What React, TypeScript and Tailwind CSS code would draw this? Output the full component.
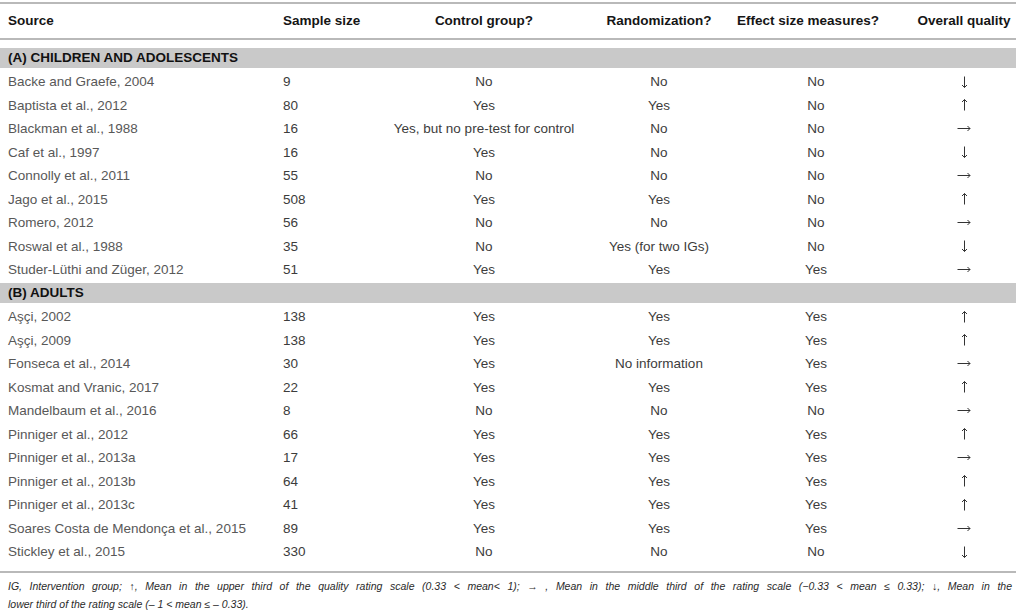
import React from "react";

type Row = [string, string, string, string, string, string];

const groupA: Row[] = [
  ["Backe and Graefe, 2004", "9", "No", "No", "No", "d"],
  ["Baptista et al., 2012", "80", "Yes", "Yes", "No", "u"],
  ["Blackman et al., 1988", "16", "Yes, but no pre-test for control", "No", "No", "r"],
  ["Caf et al., 1997", "16", "Yes", "No", "No", "d"],
  ["Connolly et al., 2011", "55", "No", "No", "No", "r"],
  ["Jago et al., 2015", "508", "Yes", "Yes", "No", "u"],
  ["Romero, 2012", "56", "No", "No", "No", "r"],
  ["Roswal et al., 1988", "35", "No", "Yes (for two IGs)", "No", "d"],
  ["Studer-Lüthi and Züger, 2012", "51", "Yes", "Yes", "Yes", "r"],
];

const groupB: Row[] = [
  ["Aşçi, 2002", "138", "Yes", "Yes", "Yes", "u"],
  ["Aşçi, 2009", "138", "Yes", "Yes", "Yes", "u"],
  ["Fonseca et al., 2014", "30", "Yes", "No information", "Yes", "r"],
  ["Kosmat and Vranic, 2017", "22", "Yes", "Yes", "Yes", "u"],
  ["Mandelbaum et al., 2016", "8", "No", "No", "No", "r"],
  ["Pinniger et al., 2012", "66", "Yes", "Yes", "Yes", "u"],
  ["Pinniger et al., 2013a", "17", "Yes", "Yes", "Yes", "r"],
  ["Pinniger et al., 2013b", "64", "Yes", "Yes", "Yes", "u"],
  ["Pinniger et al., 2013c", "41", "Yes", "Yes", "Yes", "u"],
  ["Soares Costa de Mendonça et al., 2015", "89", "Yes", "Yes", "Yes", "r"],
  ["Stickley et al., 2015", "330", "No", "No", "No", "d"],
];

const grid = "grid grid-cols-[275px_109px_200px_150px_164px_118px]";

function Arrow({ dir }: { dir: string }) {
  if (dir === "r") {
    return (
      <svg width="14" height="7" viewBox="0 0 14 7" className="inline-block">
        <path d="M0.5 3.5H13" stroke="#333" strokeWidth="1" fill="none" />
        <path d="M10.5 1L13 3.5L10.5 6" stroke="#333" strokeWidth="1" fill="none" />
      </svg>
    );
  }
  const up = dir === "u";
  return (
    <svg width="7" height="12" viewBox="0 0 7 12" className="inline-block">
      <path d="M3.5 0.5V11.5" stroke="#333" strokeWidth="1" fill="none" />
      {up ? (
        <path d="M1 3L3.5 0.5L6 3" stroke="#333" strokeWidth="1" fill="none" />
      ) : (
        <path d="M1 9L3.5 11.5L6 9" stroke="#333" strokeWidth="1" fill="none" />
      )}
    </svg>
  );
}

function DataRow({ r }: { r: Row }) {
  return (
    <div className={`${grid} h-[23.5px] items-center text-[13.5px] leading-none`}>
      <div className="pl-2 text-[#585858] whitespace-nowrap">{r[0]}</div>
      <div className="pl-2 text-[#3c3c3c]">{r[1]}</div>
      <div className="text-center text-[#3c3c3c] whitespace-nowrap">{r[2]}</div>
      <div className="text-center text-[#3c3c3c] whitespace-nowrap">{r[3]}</div>
      <div className="text-center text-[#3c3c3c]">{r[4]}</div>
      <div className="pl-[14px] flex justify-center items-center">
        <Arrow dir={r[5]} />
      </div>
    </div>
  );
}

function Band({ label }: { label: string }) {
  return (
    <div className="h-[20px] bg-[#c9c9c9] flex items-center pl-2 text-[13.5px] font-bold text-[#111] leading-none">
      {label}
    </div>
  );
}

export default function App() {
  return (
    <div className="w-[1016px] h-[613px] bg-white overflow-hidden font-['Liberation_Sans',Arial,sans-serif]">
      <div className="pt-[2px]">
        <div className="border-t-2 border-[#b9b9b9]" />
        <div className={`${grid} h-[34px] items-center text-[13.5px] font-bold text-[#151515] leading-none`}>
          <div className="pl-2">Source</div>
          <div className="pl-2 whitespace-nowrap">Sample size</div>
          <div className="text-center">Control group?</div>
          <div className="text-center">Randomization?</div>
          <div className="pr-[16px] text-center whitespace-nowrap">Effect size measures?</div>
          <div className="pl-[14px] text-center whitespace-nowrap">Overall quality</div>
        </div>
        <div className="border-t-2 border-[#b9b9b9]" />
        <div className="h-[8px]" />
        <Band label="(A) CHILDREN AND ADOLESCENTS" />
        <div className="h-[2px]" />
        {groupA.map((r) => (
          <DataRow key={r[0]} r={r} />
        ))}
        <div className="h-[1.5px]" />
        <Band label="(B) ADULTS" />
        <div className="h-[2px]" />
        {groupB.map((r) => (
          <DataRow key={r[0]} r={r} />
        ))}
        <div className="h-[7.5px]" />
        <div className="border-t-2 border-[#b9b9b9]" />
        <div className="h-[4px]" />
        <div className="pl-2 w-[1012px] italic text-[10.5px] leading-[18px] text-[#2a2a2a]">
          <div className="text-justify [text-align-last:justify] whitespace-normal">
            IG, Intervention group; ↑, Mean in the upper third of the quality rating scale (0.33 &lt; mean&lt; 1); → , Mean in the middle third of the rating scale (−0.33 &lt; mean ≤ 0.33); ↓, Mean in the
          </div>
          <div className="whitespace-nowrap">lower third of the rating scale (– 1 &lt; mean ≤ – 0.33).</div>
        </div>
      </div>
    </div>
  );
}
